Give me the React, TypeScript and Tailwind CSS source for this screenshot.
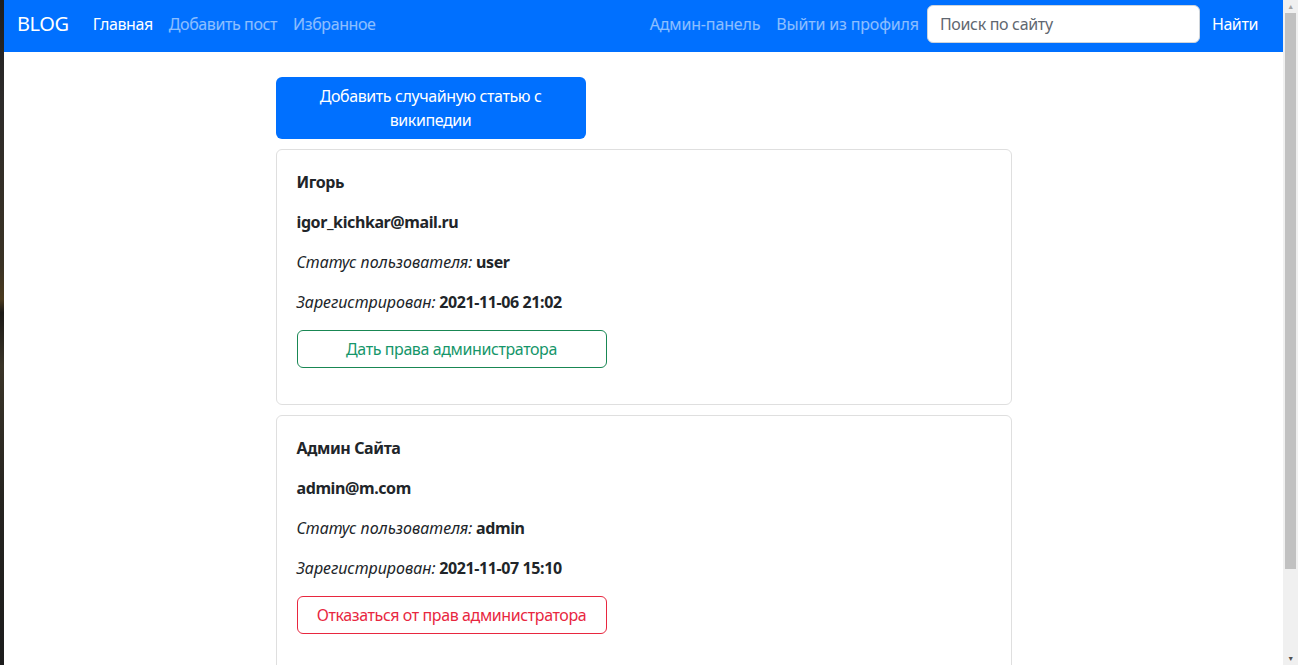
const users = [
  {
    name: "Игорь",
    email: "igor_kichkar@mail.ru",
    status: "user",
    registered: "2021-11-06 21:02",
    isAdmin: false,
  },
  {
    name: "Админ Сайта",
    email: "admin@m.com",
    status: "admin",
    registered: "2021-11-07 15:10",
    isAdmin: true,
  },
];

function Navbar() {
  return (
    <nav className="h-[52px] bg-[#0070ff] flex items-center pl-[13px] pr-[13px] pb-[4px] text-base leading-6">
      <span className="text-xl text-white mr-4">BLOG</span>
      <a className="px-2 text-white">Главная</a>
      <a className="px-2 text-white/55">Добавить пост</a>
      <a className="px-2 text-white/55">Избранное</a>
      <div className="ml-auto flex items-center">
        <a className="px-2 text-white/55 tracking-[-0.01em]">Админ-панель</a>
        <a className="px-2 text-white/55 tracking-[-0.01em]">Выйти из профиля</a>
        <input
          className="w-[273px] h-[38px] bg-white rounded-md border border-[#ced4da] px-3 text-[#212529] placeholder:text-[#5f6770] outline-none tracking-[-0.02em]"
          placeholder="Поиск по сайту"
        />
        <button className="px-3 text-white">Найти</button>
      </div>
    </nav>
  );
}

function UserCard({ u }: { u: (typeof users)[number] }) {
  return (
    <div className="border border-[#dfdfdf] rounded-md p-5 mb-[10px]">
      <p className="font-bold mb-4">{u.name}</p>
      <p className="font-bold mb-4">{u.email}</p>
      <p className="mb-4">
        <em className="tracking-normal">Статус пользователя:</em> <b>{u.status}</b>
      </p>
      <p className="mb-4">
        <em className="tracking-normal">Зарегистрирован:</em> <b>{u.registered}</b>
      </p>
      {u.isAdmin ? (
        <button className="w-[310px] h-[38px] border border-[#e8273f] text-[#e8273f] rounded-md mb-4">
          Отказаться от прав администратора
        </button>
      ) : (
        <button className="w-[310px] h-[38px] border border-[#198754] text-[#15966a] rounded-md mb-4">
          Дать права администратора
        </button>
      )}
    </div>
  );
}

export default function App() {
  return (
    <div
      className="flex h-[665px] overflow-hidden text-[#212529] text-base leading-6 tracking-[-0.025em]"
      style={{ fontFamily: '"Noto Sans", "Open Sans", sans-serif' }}
    >
      {/* desktop peeking through on the left */}
      <div className="w-1 shrink-0 bg-[linear-gradient(to_bottom,#1e1e1e_0%,#2d2b2a_15%,#3a3224_40%,#4a3a1e_45%,#1c1a17_47%,#3a3428_55%,#262420_75%,#1c1c1c_100%)]" />

      <div className="flex-1 bg-white">
        <Navbar />
        <main className="w-[736px] mx-auto pt-[25px]">
          <button className="w-[310px] h-[62px] bg-[#0070ff] text-white rounded-md px-3 py-1.5 mb-[10px] leading-6">
            Добавить случайную статью с
            <br />
            википедии
          </button>
          {users.map((u) => (
            <UserCard key={u.email} u={u} />
          ))}
        </main>
      </div>

      {/* scrollbar */}
      <div className="w-[15px] shrink-0 bg-[#f0f0f0] flex flex-col items-center">
        <div className="h-[13px] flex items-center justify-center text-[#a3a3a3] text-[7px] leading-none">▲</div>
        <div className="w-[11px] h-[556px] bg-[#c1c1c1]" />
        <div className="flex-1" />
        <div className="h-[13px] flex items-center justify-center text-[#505050] text-[7px] leading-none">▼</div>
      </div>
    </div>
  );
}
